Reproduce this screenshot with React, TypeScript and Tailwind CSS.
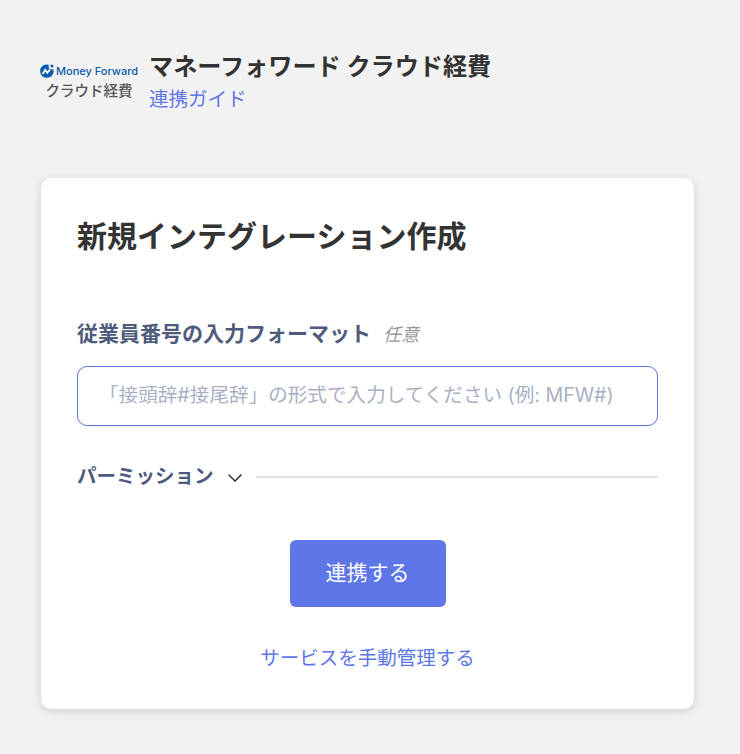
import { ChevronDown } from 'lucide-react';

function MfMark() {
  return (
    <svg className="w-[14px] h-[14px] shrink-0" viewBox="0 0 24 24">
      <path d="M15 1.2 A11.5 11.5 0 1 0 22.8 9 L17 9 L15 7 Z" fill="#0b5cab" />
      <circle cx="20.5" cy="3.5" r="2.6" fill="#0b5cab" />
      <path d="M4.5 17 L9 10 L12.5 15 L17 9.5" fill="none" stroke="#fff" strokeWidth="3.2" />
    </svg>
  );
}

export default function App() {
  return (
    <div className="min-h-[754px] bg-[#f2f2f2] px-[41px] pt-[48px] font-['Inter','Noto_Sans_CJK_JP',sans-serif]">
      <header className="flex items-start">
        <div className="w-[96px] pt-[15px] flex flex-col items-center">
          <div className="flex items-center gap-[2px] h-[16px]">
            <MfMark />
            <span className="text-[11px] leading-none font-medium text-[#0b5cab] whitespace-nowrap">
              Money Forward
            </span>
          </div>
          <span className="mt-[2px] text-[14.5px] leading-[20px] font-medium text-[#555] whitespace-nowrap">クラウド経費</span>
        </div>
        <div className="ml-[12px]">
          <h1 className="text-[24.15px] leading-[38px] font-bold text-[#333] whitespace-nowrap">マネーフォワード クラウド経費</h1>
          <a className="block text-[19.5px] leading-[27px] text-[#5e76e6]">連携ガイド</a>
        </div>
      </header>

      <main className="mt-[65px] w-[653px] h-[531px] bg-white rounded-[10px] shadow-[0_2px_10px_rgba(0,0,0,0.15)] px-[36px] pt-[37px]">
        <h2 className="text-[30px] leading-[42px] font-bold text-[#333]">新規インテグレーション作成</h2>

        <div className="mt-[62px] flex items-center gap-[12px] h-[30px]">
          <label className="text-[21px] font-bold text-[#4f5b7c]">従業員番号の入力フォーマット</label>
          <span className="text-[18px] italic text-[#999]">任意</span>
        </div>
        <div className="mt-[17px] h-[60px] w-[581px] rounded-[10px] border border-[#5e76e6] bg-white flex items-center pl-[21px] shadow-[0_1px_3px_rgba(0,0,0,0.06)]">
          <span className="text-[19.6px] text-[#a9b0c4] whitespace-nowrap">「接頭辞#接尾辞」の形式で入力してください (例: MFW#)</span>
        </div>

        <div className="mt-[36px] flex items-center h-[30px]">
          <span className="text-[19.5px] font-bold text-[#4f5b7c]">パーミッション</span>
          <ChevronDown className="ml-[9px] mt-[2px] w-[24px] h-[24px] text-[#222]" strokeWidth={1.4} />
          <div className="ml-[9px] flex-1 h-[2px] bg-[#e4e4e4]" />
        </div>

        <div className="mt-[48px] flex justify-center w-[581px]">
          <button className="w-[156px] h-[67px] pb-[2px] rounded-[6px] bg-[#5e76e6] text-white text-[21px]">連携する</button>
        </div>
        <div className="mt-[37px] w-[581px] text-center">
          <a className="text-[19.5px] leading-[29px] text-[#5e76e6]">サービスを手動管理する</a>
        </div>
      </main>
    </div>
  );
}
